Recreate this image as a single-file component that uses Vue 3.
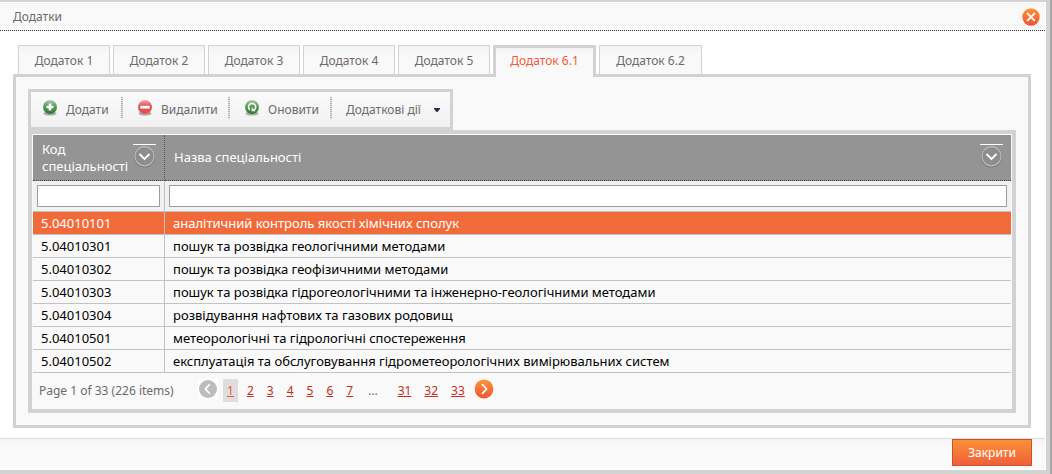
<script setup>
import { ref } from 'vue'

const tabs = ['Додаток 1', 'Додаток 2', 'Додаток 3', 'Додаток 4', 'Додаток 5', 'Додаток 6.1', 'Додаток 6.2']
const activeTab = ref('Додаток 6.1')
const selected = ref('5.04010101')
const rows = [
  ['5.04010101', 'аналітичний контроль якості хімічних сполук'],
  ['5.04010301', 'пошук та розвідка геологічними методами'],
  ['5.04010302', 'пошук та розвідка геофізичними методами'],
  ['5.04010303', 'пошук та розвідка гідрогеологічними та інженерно-геологічними методами'],
  ['5.04010304', 'розвідування нафтових та газових родовищ'],
  ['5.04010501', 'метеорологічні та гідрологічні спостереження'],
  ['5.04010502', 'експлуатація та обслуговування гідрометеорологічних вимірювальних систем']
]
const columns = ['Код спеціальності', 'Назва спеціальності']
const filters = ref(['', ''])
const firstPages = [1, 2, 3, 4, 5, 6, 7]
const lastPages = [31, 32, 33]
</script>

<template>
  <div class="screen">
    <section class="dialog" role="dialog" aria-labelledby="dialog-title">
      <header class="title-bar">
        <h1 id="dialog-title">Додатки</h1>
        <button class="icon-button" type="button" aria-label="Закрити вікно">
          <svg width="18" height="18" viewBox="0 0 18 18">
            <defs>
              <linearGradient id="orange" x1="0" y1="0" x2="0" y2="1">
                <stop offset="0" stop-color="#fb9336" />
                <stop offset="1" stop-color="#ee5535" />
              </linearGradient>
            </defs>
            <circle cx="9" cy="9" r="8.7" fill="url(#orange)" />
            <path d="M5.2 5.2l7.6 7.6M12.8 5.2l-7.6 7.6" stroke="#fff" stroke-width="1.8" />
          </svg>
        </button>
      </header>

      <main class="content">
        <div class="tabs" role="tablist">
          <button
            v-for="tab in tabs"
            :key="tab"
            type="button"
            role="tab"
            class="tab"
            :class="{ active: tab === activeTab }"
            :aria-selected="tab === activeTab"
            @click="activeTab = tab"
          >{{ tab }}</button>
        </div>

        <div class="panel" role="tabpanel">
          <div class="toolbar" role="toolbar">
            <button type="button" class="tool">
              <svg class="tool-icon" width="16" height="18" viewBox="0 0 16 18">
                <defs>
                  <linearGradient id="green" x1="0" y1="0" x2="0" y2="1">
                    <stop offset="0" stop-color="#a9cfaa" />
                    <stop offset="0.45" stop-color="#579c59" />
                    <stop offset="1" stop-color="#2f7434" />
                  </linearGradient>
                  <linearGradient id="red" x1="0" y1="0" x2="0" y2="1">
                    <stop offset="0" stop-color="#f4a5a5" />
                    <stop offset="0.45" stop-color="#e15354" />
                    <stop offset="1" stop-color="#f04d48" />
                  </linearGradient>
                </defs>
                <ellipse cx="8" cy="14.5" rx="6.5" ry="2" fill="#777" opacity="0.6" />
                <circle cx="8" cy="8" r="7" fill="url(#green)" />
                <path d="M8 4.5v7M4.5 8h7" stroke="#fff" stroke-width="2.6" />
              </svg>
              <span>Додати</span>
            </button>
            <span class="divider"></span>
            <button type="button" class="tool">
              <svg class="tool-icon" width="16" height="18" viewBox="0 0 16 18">
                <ellipse cx="8" cy="14.5" rx="6.5" ry="2" fill="#777" opacity="0.6" />
                <circle cx="8" cy="8" r="7" fill="url(#red)" />
                <rect x="3" y="6.5" width="10" height="3.4" fill="#fff" stroke="#b94a4a" stroke-width="0.5" />
              </svg>
              <span>Видалити</span>
            </button>
            <span class="divider"></span>
            <button type="button" class="tool">
              <svg class="tool-icon" width="16" height="18" viewBox="0 0 16 18">
                <ellipse cx="8" cy="14.5" rx="6.5" ry="2" fill="#777" opacity="0.6" />
                <circle cx="8" cy="8" r="7" fill="url(#green)" />
                <path d="M5.8 10.8a3.6 3.6 0 1 1 4.6 0" fill="none" stroke="#fff" stroke-width="1.5" />
                <path d="M7.6 8.3v4h4z" fill="#fff" />
              </svg>
              <span>Оновити</span>
            </button>
            <span class="divider"></span>
            <button type="button" class="tool menu" aria-haspopup="true">
              <span>Додаткові дії</span>
              <svg width="6" height="4" viewBox="0 0 6 4"><path d="M0 0h6v1L3.5 4h-1L0 1z" fill="#243048" /></svg>
            </button>
          </div>

          <div class="grid">
            <table>
              <colgroup>
                <col class="code-col" />
                <col />
              </colgroup>
              <thead>
                <tr class="heads">
                  <th v-for="name in columns" :key="name" scope="col">
                    <div class="head">
                      <span>{{ name }}</span>
                      <button type="button" class="icon-button" :aria-label="'Фільтр: ' + name">
                        <svg width="23" height="24" viewBox="0 0 23 24">
                          <path d="M0 .5h23" stroke="#fff" />
                          <circle cx="11.5" cy="13" r="9.9" fill="none" stroke="#787878" stroke-width="1.4" />
                          <circle cx="11.5" cy="12.2" r="9.6" fill="#8d8d8d" stroke="#bcbcbc" stroke-width="1.2" />
                          <path d="M6.5 10l5 5 5-5" fill="none" stroke="#fff" stroke-width="1.8" />
                        </svg>
                      </button>
                    </div>
                  </th>
                </tr>
                <tr class="filters">
                  <td v-for="(name, i) in columns" :key="name">
                    <input v-model="filters[i]" type="text" :aria-label="name" />
                  </td>
                </tr>
              </thead>
              <tbody>
                <tr
                  v-for="row in rows"
                  :key="row[0]"
                  :class="{ selected: row[0] === selected }"
                  @click="selected = row[0]"
                >
                  <td>{{ row[0] }}</td>
                  <td>{{ row[1] }}</td>
                </tr>
              </tbody>
            </table>

            <nav class="pager" aria-label="Сторінки">
              <span class="summary">Page 1 of 33 (226 items)</span>
              <button type="button" class="icon-button previous" aria-label="Попередня" disabled>
                <svg width="20" height="20" viewBox="0 0 20 20">
                  <path d="M0 0h20v20H0z" fill="#fff" />
                  <circle cx="10" cy="10" r="9" fill="#bcbcbc" />
                  <path d="M11.8 5.2L7.4 10l4.4 4.8" fill="none" stroke="#fff" stroke-width="1.7" />
                </svg>
              </button>
              <a v-for="page in firstPages" :key="page" href="#" :class="{ current: page === 1 }">{{ page }}</a>
              <span class="ellipsis">…</span>
              <a v-for="page in lastPages" :key="page" href="#">{{ page }}</a>
              <button type="button" class="icon-button next" aria-label="Наступна">
                <svg width="20" height="20" viewBox="0 0 20 20">
                  <circle cx="10" cy="10" r="9.4" fill="url(#orange)" />
                  <path d="M8 5.2l4.6 4.8L8 14.8" fill="none" stroke="#fff" stroke-width="1.7" />
                </svg>
              </button>
            </nav>
          </div>
        </div>
      </main>

      <footer class="footer">
        <button type="button" class="close">Закрити</button>
      </footer>
    </section>
  </div>
</template>

<style>
body {
  margin: 0;
  background: #a6a6a6;
}
</style>

<style scoped>
* {
  box-sizing: border-box;
}

.screen {
  padding-right: 2px;
  font-family: Tahoma, "Noto Sans", "DejaVu Sans", sans-serif;
  font-size: 12px;
  color: #6b6b6b;
}

button {
  font: inherit;
  color: inherit;
  border: 0;
  padding: 0;
  background: none;
  cursor: pointer;
}

svg {
  display: block;
  flex: none;
}

.icon-button {
  flex: none;
}

.dialog {
  background: #fff;
  border: solid #d2d2d2;
  border-width: 2px 4px 4px 0;
  padding: 1px 1px 1px 0;
}

.title-bar {
  display: flex;
  align-items: center;
  justify-content: space-between;
  height: 28px;
  padding: 0 5px 0 13px;
  background: linear-gradient(#f4f4f4, #f9f9f9 5px);
  border-bottom: 1px dotted #333;
}

h1 {
  margin: 0;
  font-size: 12px;
  font-weight: 400;
}

.content {
  padding: 14px 14px 10px 13px;
}

.tabs {
  display: flex;
  gap: 3px;
  padding-left: 5px;
  height: 32px;
  position: relative;
}

.tab {
  height: 29px;
  min-width: 92px;
  border: 1px solid #d2d2d2;
  border-bottom: 0;
  background: linear-gradient(#f3f3f3, #f9f9f9 8px);
  text-align: center;
}

.tab:nth-last-child(-n + 2) {
  min-width: 103px;
}

.tab.active {
  height: 32px;
  border-width: 3px;
  border-bottom: 0;
  padding-bottom: 4px;
  color: #f15a38;
}

.panel {
  margin-top: -3px;
  border: 3px solid #d2d2d2;
  padding: 12px;
  background: #f9f9f9;
}

.toolbar {
  display: flex;
  align-items: flex-start;
  width: fit-content;
  height: 41px;
  padding: 5px 10px 5px 11px;
  border: 3px solid #d2d2d2;
  background: linear-gradient(#fafafa, #f1f1f1);
}

.tool {
  display: flex;
  align-items: center;
  gap: 8px;
  height: 25px;
  width: 79px;
}

.tool:nth-of-type(2) {
  width: 91px;
}

.tool:nth-of-type(3) {
  width: 86px;
}

.tool-icon {
  margin-bottom: 4px;
}

.divider {
  width: 2px;
  height: 22px;
  margin-right: 14px;
  background: repeating-linear-gradient(#b5b5b5 0 1px, #e2e2e2 1px 2px);
}

.tool.menu {
  width: 94px;
  justify-content: space-between;
}

.grid {
  border: 4px solid #d2d2d2;
  padding: 1px 1px 0;
  background: linear-gradient(#fff, #fff) top / 100% 1px no-repeat #f9f9f9;
}

table {
  width: 100%;
  table-layout: fixed;
  border-collapse: separate;
  border-spacing: 0;
  font-size: 13px;
  line-height: 17px;
  color: #000;
}

.code-col {
  width: 132px;
}

th {
  height: 46px;
  padding: 0 8px 0 9px;
  background: #949494;
  border-bottom: 1px dotted #444;
  color: #fff;
  font-weight: 400;
  text-align: left;
}

th:first-child {
  border-right: 1px dotted #555;
}

.head {
  display: flex;
  align-items: center;
  justify-content: space-between;
}

.head span {
  min-width: 0;
}

.head .icon-button {
  margin-bottom: 4px;
}

td {
  height: 23px;
  padding: 0 8px;
  border-bottom: 1px solid #c2c2c2;
}

td:first-child {
  border-right: 1px solid #c2c2c2;
}

.filters td {
  height: 31px;
  padding: 4px;
  background: #f1f1f1;
}

input {
  display: block;
  width: 100%;
  height: 22px;
  padding: 0 4px;
  border: 1px solid #9f9f9f;
  background: #fff;
  font: inherit;
}

.selected td {
  background: #f16b3a;
  color: #fff;
}

.pager {
  display: flex;
  align-items: flex-start;
  height: 36px;
  padding: 6px 6px 0;
  line-height: 23px;
}

.summary {
  width: 159px;
}

.previous {
  margin-right: 5px;
}

.pager a {
  padding: 0 4px;
  margin-right: 5px;
  color: #c22d1c;
}

.pager a.current {
  background: #dedede;
  color: #f15a38;
}

.ellipsis {
  padding: 0 16px 0 6px;
}

.footer {
  display: flex;
  justify-content: flex-end;
  align-items: flex-start;
  height: 31px;
  padding-right: 13px;
  border-top: 1px solid #dcdcdc;
  background: linear-gradient(#f4f4f4, #f9f9f9 5px);
}

.close {
  width: 80px;
  height: 27px;
  border: 1px solid #cd4f2c;
  background: linear-gradient(#fb9138, #ee603b);
  color: #fff;
}
</style>
